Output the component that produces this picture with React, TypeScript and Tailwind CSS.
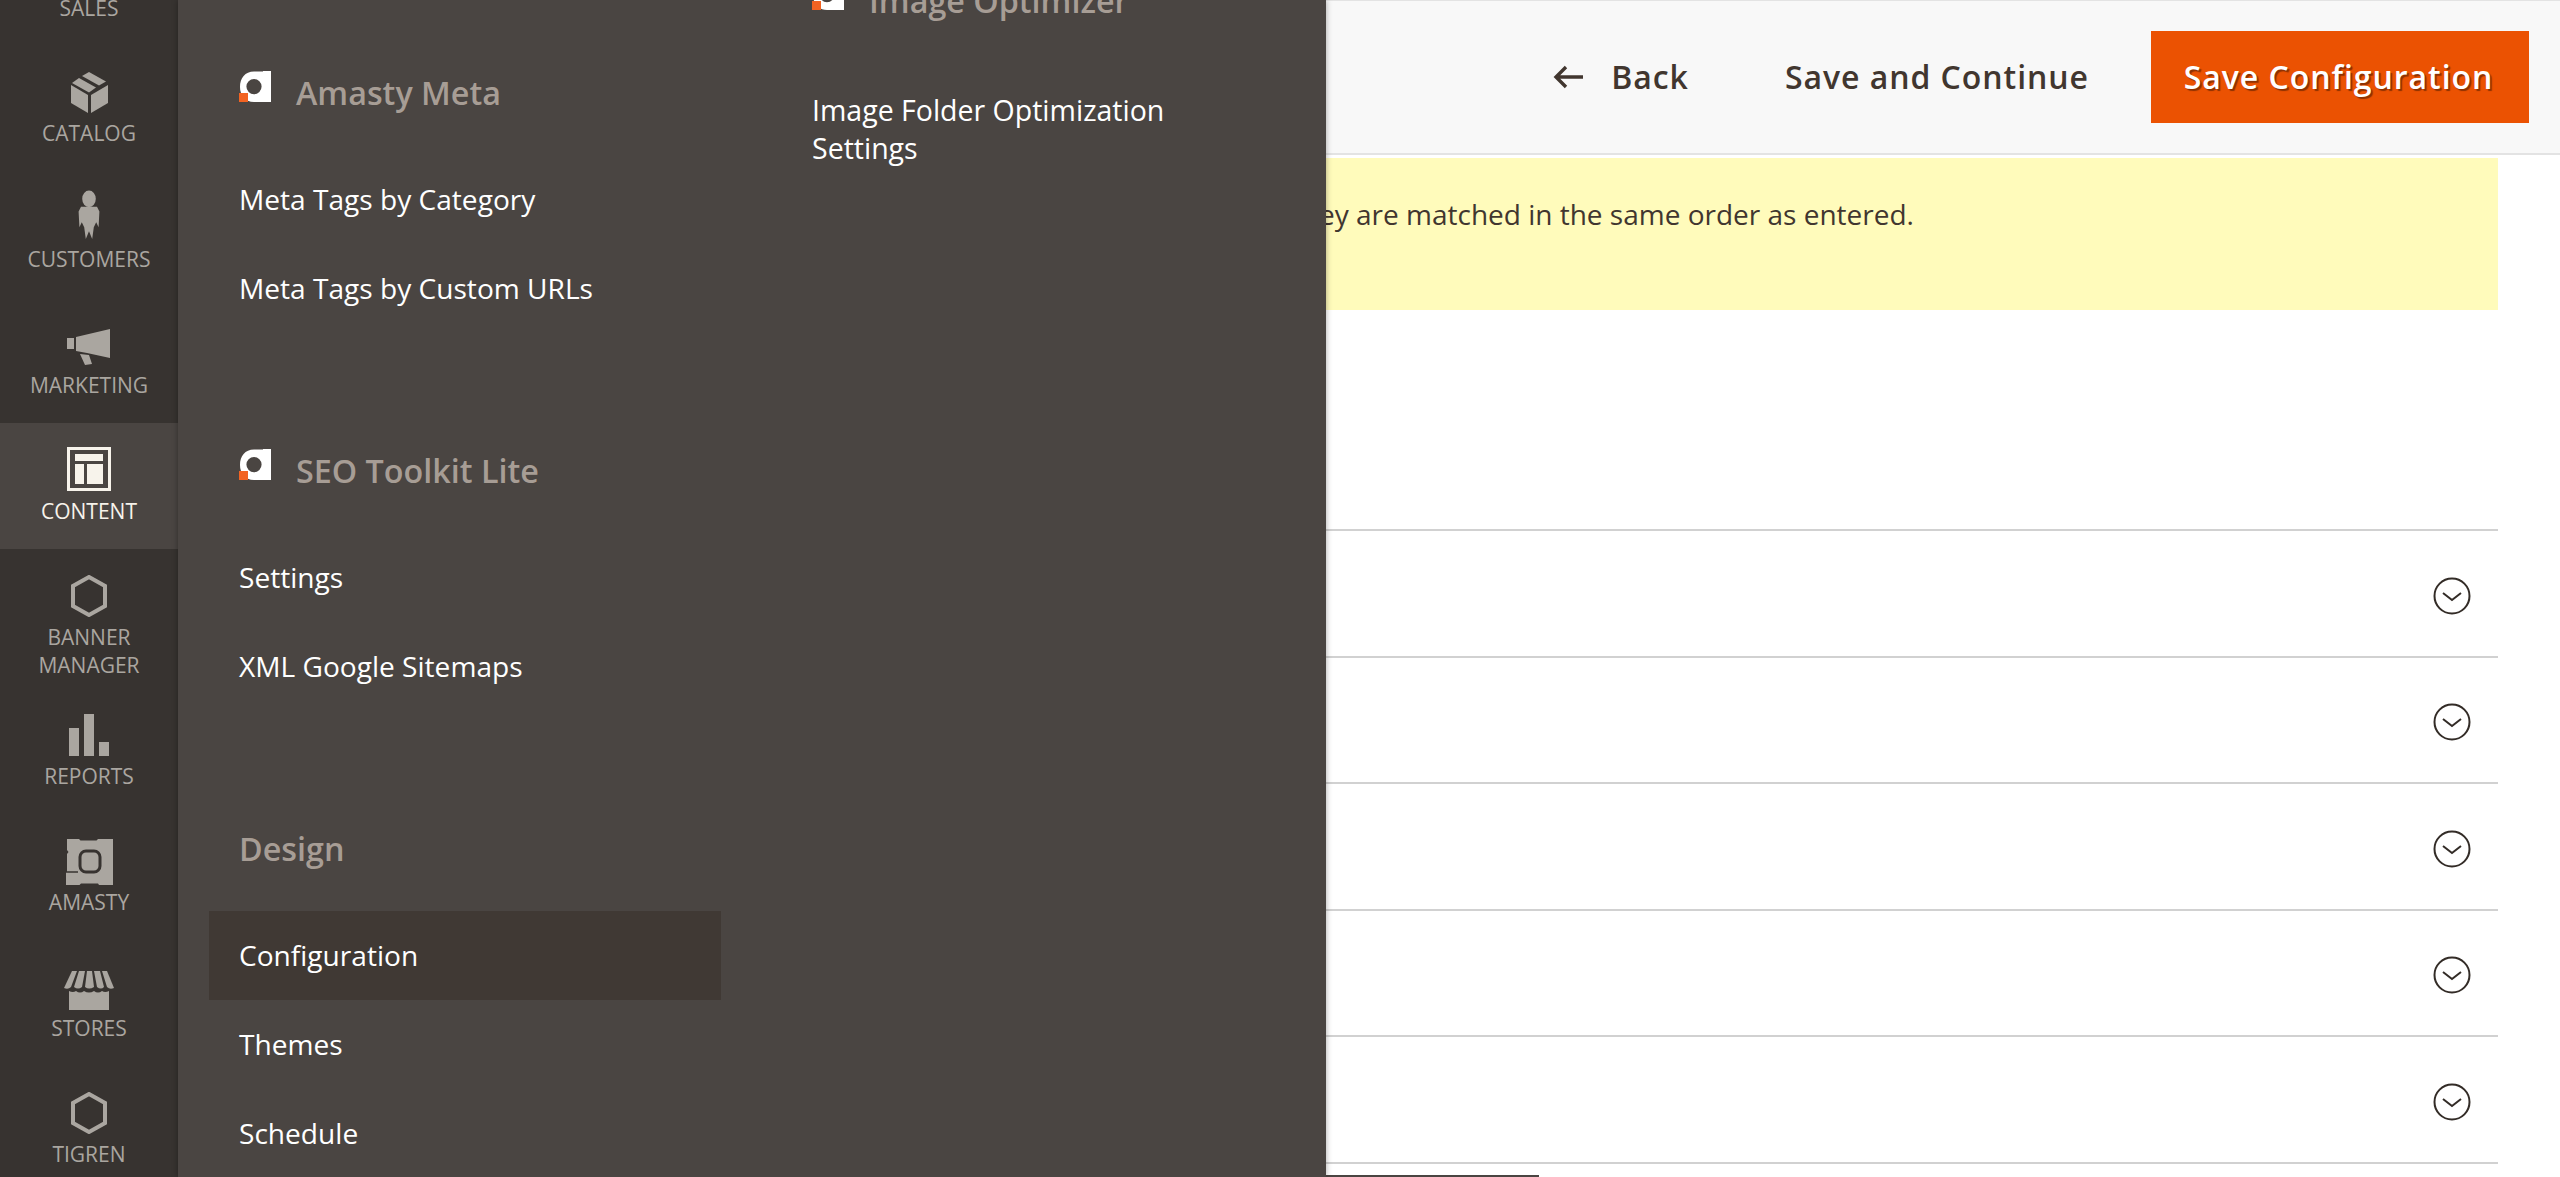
import React from "react";

const font = { fontFamily: '"Open Sans", sans-serif' };

function Box() {
  return (
    <svg viewBox="0 0 37 41" className="w-[37px] h-[41px]" fill="#aaa6a0">
      <path d="M18 0 L35 9.5 L28 13.5 L11 4 Z" />
      <path d="M8 6 L25 15.5 L18 20.5 L1 11 Z" />
      <path d="M0 13 L17 23 V41 L0 31 Z" />
      <path d="M37 13 L20 23 V41 L37 31 Z" />
    </svg>
  );
}
function Person() {
  return (
    <svg viewBox="0 0 30 50" preserveAspectRatio="none" className="w-[24px] h-[49px] mb-[8px]" fill="#aaa6a0">
      <circle cx="15" cy="9" r="8.5" />
      <path d="M5 17 H25 L28 22 L27 38 L24 33 L21 38 L19 50 L15 42 L11 50 L9 38 L6 33 L3 38 L2 22 Z" />
    </svg>
  );
}
function Horn() {
  return (
    <svg viewBox="0 0 44 36" className="w-[44px] h-[36px] mt-[6px]" fill="#aaa6a0">
      <path d="M0 9 H7 V20 H0 Z" />
      <path d="M9 8 L43 0 V29 L20 24 L9 22 Z" />
      <path d="M13 25 L22 26 L25 35 L18 36 Z" />
    </svg>
  );
}
function Layout() {
  return (
    <svg viewBox="0 0 44 44" className="w-[44px] h-[44px] mb-[2px]">
      <rect x="1.5" y="1.5" width="41" height="41" fill="none" stroke="#f7f3eb" strokeWidth="3" />
      <path d="M8 7 H36 V14 H8 Z M8 17 H17 V37 H8 Z M20 17 H36 V37 H20 Z" fill="#f7f3eb" />
    </svg>
  );
}
function Hex() {
  return (
    <svg viewBox="0 0 36 42" className="w-[36px] h-[42px]">
      <path d="M18 2 L34 11 V31 L18 40 L2 31 V11 Z" fill="none" stroke="#aaa6a0" strokeWidth="4" />
    </svg>
  );
}
function Bars() {
  return (
    <svg viewBox="0 0 40 42" className="w-[40px] h-[42px]" fill="#aaa6a0">
      <rect x="0" y="14" width="10" height="28" />
      <rect x="15" y="0" width="10" height="42" />
      <rect x="30" y="28" width="10" height="14" />
    </svg>
  );
}
function Amasty() {
  return (
    <svg viewBox="0 0 47 46" className="w-[47px] h-[46px] mt-[1px]">
      <path
        fill="#aaa6a0"
        d="M1 0 H13 L14.5 1.5 H30.5 L32 0 H47 V46 H33 L32 44.5 H15 L13.5 46 H0 V33 H1 V15 L2.5 13 L1 11 Z"
      />
      <rect x="14" y="12" width="20" height="21" rx="6" fill="none" stroke="#373330" strokeWidth="3" />
      <path d="M0 33 H12" stroke="#373330" strokeWidth="1.5" />
    </svg>
  );
}
function Store() {
  return (
    <svg viewBox="0 0 50 39" className="w-[50px] h-[39px] mt-[6px]" fill="#aaa6a0">
      <path d="M8 0 H13 L7 16 Q4 19 0 17 Z" />
      <path d="M15 0 H21 L18 16 Q14 19 10 16 Z" />
      <path d="M23 0 H28 L30 16 Q25 19 21 16 Z" />
      <path d="M30 0 H36 L40 16 Q37 19 33 16 Z" />
      <path d="M38 0 H43 L50 17 Q46 19 43 16 Z" />
      <path d="M5 20 Q9 22 12 20 Q16 23 20 20 Q25 23 30 20 Q34 23 38 20 Q41 22 45 20 V39 H5 Z" />
    </svg>
  );
}

function AmastyLogo() {
  return (
    <svg viewBox="0 0 32 31" className="w-[32px] h-[31px] shrink-0">
      <path
        fillRule="evenodd"
        fill="#fff"
        d="M15 0.5 H24 V0 H32 V31 H15 C6 31 1 24 1 16 C1 7 6 0.5 15 0.5 Z M15 8 A7.6 7.6 0 1 0 15 23.2 A7.6 7.6 0 1 0 15 8 Z"
      />
      <rect x="0" y="22" width="9" height="9" fill="#f26322" />
    </svg>
  );
}

function Chevron() {
  return (
    <svg viewBox="0 0 38 38" className="w-[38px] h-[38px]" fill="none" stroke="#332c27">
      <circle cx="19" cy="19" r="17.5" strokeWidth="2" />
      <path d="M10 16 L19 23 L28 16" strokeWidth="2" />
    </svg>
  );
}

function NavItem({ icon, label, active, h = "h-[126px]" }: { icon: React.ReactNode; label: React.ReactNode; active?: boolean; h?: string }) {
  return (
    <div className={`${h} shrink-0 flex flex-col items-center pt-[22px] ${active ? "bg-[#4a4542] text-[#f7f3eb]" : "text-[#aaa6a0]"}`}>
      <div className="h-[50px] flex items-center justify-center">{icon}</div>
      <div className="mt-[2px] text-[21px] leading-[28px] text-center">{label}</div>
    </div>
  );
}

function MenuLink({ children, active }: { children: React.ReactNode; active?: boolean }) {
  return (
    <div className={`h-[89px] -mx-[30px] px-[30px] flex items-center text-[28.1px] text-white ${active ? "bg-[#403934]" : ""}`}>
      {children}
    </div>
  );
}

function Heading({ children, logo = true }: { children: React.ReactNode; logo?: boolean }) {
  return (
    <div className="h-[60px] flex items-center gap-[25px] whitespace-nowrap">
      {logo && <div className="-mt-[16px]"><AmastyLogo /></div>}
      <span className="-mt-[3px] text-[32.3px] font-semibold text-[#a79d95]">{children}</span>
    </div>
  );
}

export default function App() {
  return (
    <div className="w-[2560px] h-[1177px] overflow-hidden flex bg-white" style={font}>
      {/* Sidebar */}
      <div className="w-[178px] shrink-0 bg-[#373330] flex flex-col overflow-hidden">
        <div className="h-[51px] shrink-0 -mt-[6px] text-[21px] leading-[28px] text-center text-[#aaa6a0]">SALES</div>
        <NavItem icon={<Box />} label="CATALOG" />
        <NavItem icon={<Person />} label="CUSTOMERS" />
        <NavItem icon={<Horn />} label="MARKETING" />
        <NavItem icon={<Layout />} label="CONTENT" active />
        <NavItem icon={<Hex />} label={<>BANNER<br />MANAGER</>} h="h-[139px]" />
        <NavItem icon={<Bars />} label="REPORTS" />
        <NavItem icon={<Amasty />} label="AMASTY" />
        <NavItem icon={<Store />} label="STORES" />
        <NavItem icon={<Hex />} label="TIGREN" />
      </div>

      {/* Flyout */}
      <div className="w-[1148px] shrink-0 bg-[#4a4542] flex overflow-hidden relative z-10 shadow-[0_0_6px_rgba(0,0,0,0.35)]">
        <div className="w-[634px] shrink-0 pl-[61px] pr-[121px] pt-[64px]">
          <Heading>Amasty Meta</Heading>
          <div className="mt-[31px]">
            <MenuLink>Meta Tags by Category</MenuLink>
            <MenuLink>Meta Tags by Custom URLs</MenuLink>
          </div>
          <div className="mt-[109px]">
            <Heading>SEO Toolkit Lite</Heading>
          </div>
          <div className="mt-[31px]">
            <MenuLink>Settings</MenuLink>
            <MenuLink>XML Google Sitemaps</MenuLink>
          </div>
          <div className="mt-[109px]">
            <Heading logo={false}>Design</Heading>
          </div>
          <div className="mt-[31px]">
            <MenuLink active>Configuration</MenuLink>
            <MenuLink>Themes</MenuLink>
            <MenuLink>Schedule</MenuLink>
          </div>
        </div>
        <div className="flex-1 pr-[120px] -mt-[28px]">
          <Heading>Image Optimizer</Heading>
          <div className="mt-[59px] text-[28.5px] leading-[38px] text-white w-[380px]">
            Image Folder Optimization Settings
          </div>
        </div>
      </div>

      {/* Page */}
      <div className="flex-1 flex flex-col min-w-0">
        <div className="h-[155px] shrink-0 bg-[#f8f8f8] border-t border-b-2 border-[#e3e3e3] flex items-center justify-end pr-[31px] text-[#41362f]">
          <svg viewBox="0 0 30 24" className="w-[30px] h-[24px] mr-[28px]" fill="none" stroke="#41362f" strokeWidth="3.4">
            <path d="M13 2 L3 12 L13 22 M3 12 H30" />
          </svg>
          <span className="text-[32px] font-semibold tracking-[0.95px]">Back</span>
          <span className="ml-[96px] text-[32px] font-semibold tracking-[0.95px]">Save and Continue</span>
          <div className="ml-[62px] w-[378px] h-[92px] bg-[#eb5202] flex items-center justify-center pr-[3px] text-[32px] font-semibold text-white [text-shadow:2px_2px_1px_rgba(0,0,0,0.4)] tracking-[0.95px]">
            Save Configuration
          </div>
        </div>
        <div className="pr-[62px] mt-[3px]">
          <div className="h-[152px] bg-[#fffbbb] pt-[37px] text-[28px] leading-[38px] text-[#41362f] whitespace-nowrap overflow-hidden">
            <span className="-ml-[7px] block">ey are matched in the same order as entered.</span>
          </div>
          <div className="h-[219px]" />
          {[0, 1, 2, 3, 4].map((i) => (
            <div key={i} className="h-[126.5px] border-t-2 border-[#d1d1d1] flex items-center justify-end pr-[27px] pt-[5px]">
              <Chevron />
            </div>
          ))}
          <div className="border-t-2 border-[#d1d1d1]" />
        </div>
        <div className="mt-[11px] w-[213px] h-[3px] bg-[#4a4542]" />
      </div>
    </div>
  );
}
